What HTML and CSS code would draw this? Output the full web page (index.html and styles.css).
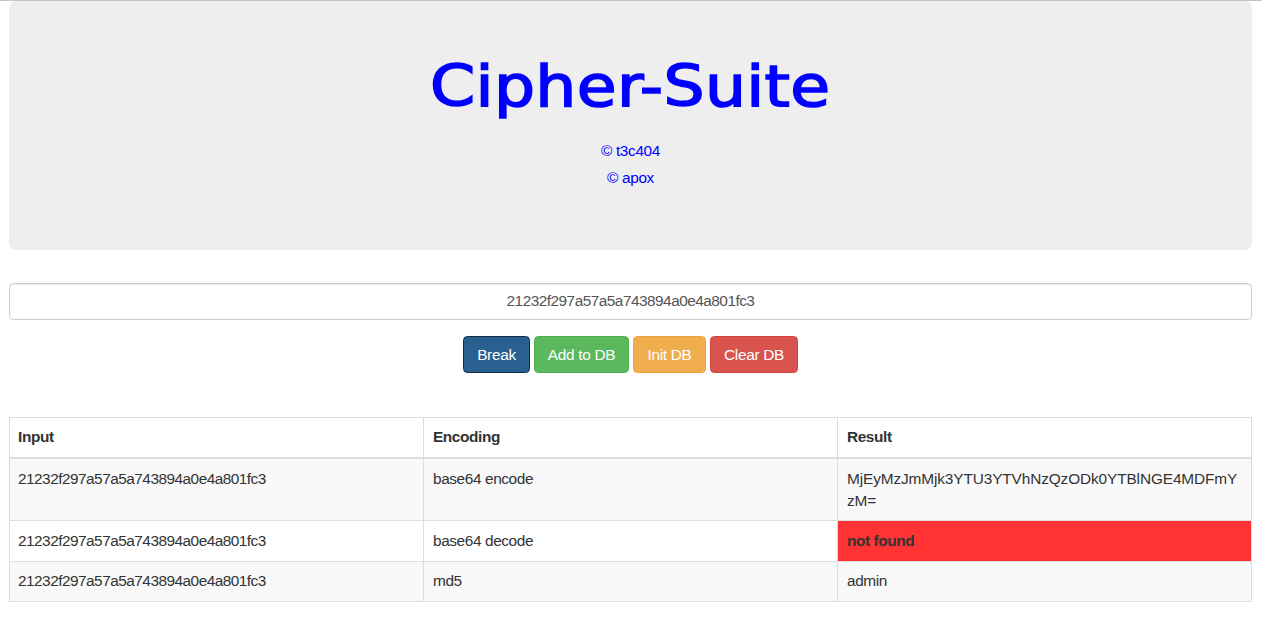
FILE: index.html
```
<!DOCTYPE html>
<html lang="en">
<head>
<meta charset="utf-8">
<title>Cipher-Suite</title>
<link rel="stylesheet" href="styles.css">
</head>
<body>
<header class="jumbotron">
<h1 class="title">Cipher-Suite</h1>
<p class="credit">© t3c404</p>
<p class="credit">© apox</p>
</header>
<form class="form">
<input class="field" type="text" value="21232f297a57a5a743894a0e4a801fc3" aria-label="Input">
<div class="actions">
<button type="button" class="btn break">Break</button>
<button type="button" class="btn add">Add to DB</button>
<button type="button" class="btn init">Init DB</button>
<button type="button" class="btn clear">Clear DB</button>
</div>
</form>
<table class="results">
<thead>
<tr class="head"><th>Input</th><th>Encoding</th><th>Result</th></tr>
</thead>
<tbody>
<tr class="tall odd"><td class="hash">21232f297a57a5a743894a0e4a801fc3</td><td>base64 encode</td><td class="encoded">MjEyMzJmMjk3YTU3YTVhNzQzODk0YTBlNGE4MDFmY<br>zM=</td></tr>
<tr class="mid"><td class="hash">21232f297a57a5a743894a0e4a801fc3</td><td>base64 decode</td><td class="missing">not found</td></tr>
<tr class="last odd"><td class="hash">21232f297a57a5a743894a0e4a801fc3</td><td>md5</td><td>admin</td></tr>
</tbody>
</table>
</body>
</html>
```
FILE: styles.css
```
* { box-sizing: border-box; }
body {
  margin: 0;
  height: 626px;
  padding: 0 10px 0 9px;
  border-top: 1px solid #c8c4c1;
  background: #fff;
  color: #333;
  font: 15.4px/22px "Liberation Sans", Arial, sans-serif;
}
.jumbotron {
  height: 249px;
  padding-top: 50px;
  border-radius: 7px;
  background: #eee;
  color: #00f;
  text-align: center;
}
.title {
  width: fit-content;
  height: 70px;
  margin: 0 auto 16px;
  font: 400 57px/70px "DejaVu Sans", sans-serif;
  letter-spacing: 0.3px;
  -webkit-text-stroke: 1.6px #00f;
  transform: scaleX(1.136);
}
.credit { margin: 0; height: 27px; line-height: 27px; letter-spacing: -0.35px; }
.form { margin-top: 33px; }
.field {
  display: block;
  width: 100%;
  height: 37px;
  padding: 5px 13px 7px;
  border: 1px solid #ccc;
  border-radius: 4.4px;
  box-shadow: inset 0 1px 1px rgba(0, 0, 0, .075);
  background: #fff;
  color: #555;
  font: inherit;
  letter-spacing: -0.52px;
  text-align: center;
}
.actions { display: flex; justify-content: center; gap: 4px; margin-top: 16px; }
.btn {
  height: 37px;
  padding: 0;
  border: 1px solid;
  border-radius: 4.4px;
  color: #fff;
  font: inherit;
  letter-spacing: -0.3px;
  white-space: nowrap;
}
.break { width: 67px; background: #286090; border-color: #122b40; }
.add { width: 95px; background: #5cb85c; border-color: #4cae4c; }
.init { width: 73px; background: #f0ad4e; border-color: #eea236; }
.clear { width: 88px; background: #d9534f; border-color: #d43f3a; }
.results {
  width: 1243px;
  margin-top: 44px;
  table-layout: fixed;
  border-spacing: 0;
  border: 1px solid #ddd;
  border-width: 1px 0 0 1px;
}
.results th, .results td {
  padding: 9px 8px 0 9px;
  border: 1px solid #ddd;
  border-width: 0 1px 1px 0;
  text-align: left;
  vertical-align: top;
  letter-spacing: -0.4px;
  white-space: nowrap;
}
.results th:first-child, .results td:first-child { padding-left: 8px; }
.results th { padding-top: 8px; border-bottom-width: 2px; }
.head { height: 41px; }
.tall { height: 62px; }
.mid { height: 41px; }
.last { height: 40px; }
.results .last td { padding-top: 8px; }
.odd { background: #f9f9f9; }
.results .hash { letter-spacing: -0.52px; }
.results .encoded { letter-spacing: -0.12px; }
.results .missing { background: #f33; font-weight: 700; }
```
